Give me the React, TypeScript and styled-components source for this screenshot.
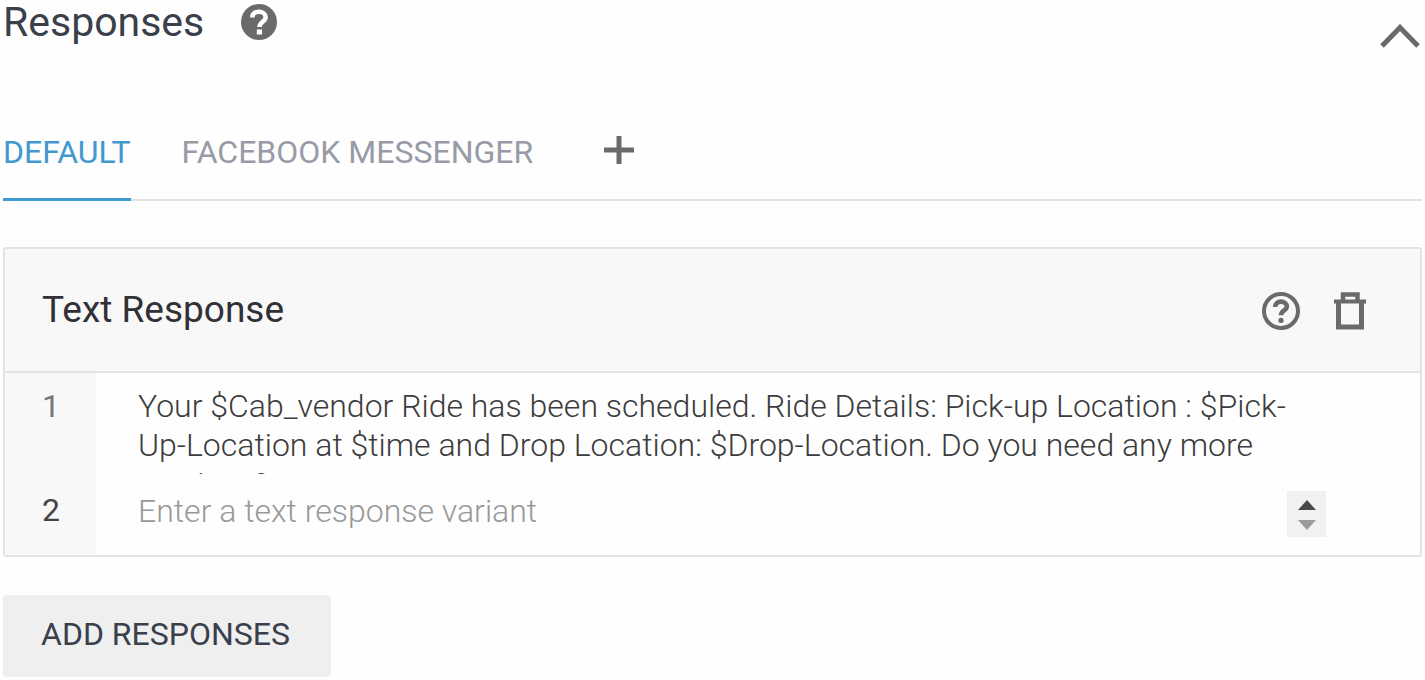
import React, { useState } from "react";
import styled, { createGlobalStyle } from "styled-components";

const GlobalStyle = createGlobalStyle`
  *, *::before, *::after { box-sizing: border-box; }
  body {
    margin: 0;
    background: #fefefe;
    color: #3a3f4c;
    font-family: Roboto, "Liberation Sans", sans-serif;
  }
  button, textarea { font: inherit; color: inherit; }
`;

const Page = styled.main`
  padding: 0 3px;
`;

const SectionHeader = styled.header`
  display: flex;
  align-items: flex-start;
  justify-content: space-between;
  height: 104px;
`;

const TitleGroup = styled.div`
  display: flex;
  align-items: center;
  gap: 37px;
  height: 44px;
`;

const Title = styled.h1`
  margin: 0;
  font-size: 41px;
  line-height: 44px;
  font-weight: 400;
`;

const IconButton = styled.button`
  display: flex;
  align-items: center;
  justify-content: center;
  padding: 0;
  border: 0;
  background: none;
  color: #6a6a6a;
  cursor: pointer;
`;

const CollapseButton = styled(IconButton)`
  height: 72px;
  padding-right: 2px;
`;

const Tabs = styled.div`
  display: flex;
  align-items: stretch;
  height: 97px;
  border-bottom: 2px solid #e2e2e2;
`;

const Tab = styled.button<{ $active?: boolean }>`
  margin: 0 51px -2px 0;
  padding: 2px 0 0;
  border: 0;
  border-bottom: 3px solid ${(p) => (p.$active ? "#3f9bd1" : "transparent")};
  background: none;
  color: ${(p) => (p.$active ? "#4399cf" : "#979ba6")};
  font-size: 32px;
  line-height: 40px;
  white-space: nowrap;
  cursor: pointer;
`;

const AddTabButton = styled(IconButton)`
  margin-left: 20px;
  height: 92px;
`;

const Card = styled.section`
  margin-top: 46px;
  border: 2px solid #e3e3e3;
  border-radius: 3px;
`;

const CardHeader = styled.div`
  display: flex;
  align-items: center;
  justify-content: space-between;
  height: 124px;
  padding: 0 54px 0 37px;
  border-bottom: 2px solid #e3e3e3;
  background: #f8f8f8;
`;

const CardTitle = styled.h2`
  margin: 0;
  font-size: 37px;
  line-height: 44px;
  font-weight: 400;
  color: #303036;
`;

const CardActions = styled.div`
  display: flex;
  align-items: center;
  gap: 34px;
  padding-top: 2px;
`;

const Variant = styled.div`
  display: flex;
`;

const Gutter = styled.label<{ $muted?: boolean }>`
  flex: 0 0 91px;
  padding: 14px 0 0 37px;
  background: #f8f8f8;
  color: ${(p) => (p.$muted ? "#777777" : "#444444")};
  font-size: 32px;
  line-height: 39px;
`;

const VariantBody = styled.div<{ $last?: boolean }>`
  display: flex;
  flex: 1;
  align-items: flex-start;
  min-width: 0;
  height: ${(p) => (p.$last ? "78px" : "104px")};
  padding: 14px 94px 0 42px;
`;

const VariantInput = styled.textarea<{ $rows: number }>`
  display: block;
  flex: 1;
  min-width: 0;
  height: ${(p) => (p.$rows > 1 ? "87px" : "46px")};
  margin: 0;
  padding: ${(p) => (p.$rows > 1 ? "0" : "1px 0 0")};
  border: 0;
  outline: 0;
  resize: none;
  overflow: hidden;
  background: transparent;
  color: #3c3c3c;
  font-size: 32px;
  line-height: 39px;
  font-weight: 300;
  &::placeholder { color: #999999; opacity: 1; }
`;

const Stepper = styled.div`
  display: flex;
  flex-direction: column;
  width: 39px;
  height: 46px;
  background: #f1f1f1;
`;

const StepButton = styled(IconButton)<{ $dim?: boolean }>`
  flex: 1;
  padding-top: ${(p) => (p.$dim ? "0" : "4px")};
  padding-bottom: ${(p) => (p.$dim ? "2px" : "0")};
  color: ${(p) => (p.$dim ? "#9c9c9c" : "#484848")};
`;

const AddButton = styled.button`
  margin-top: 38px;
  height: 82px;
  padding: 0 41px 4px 38px;
  border: 0;
  border-radius: 4px;
  background: #efefef;
  font-size: 32px;
  line-height: 40px;
  cursor: pointer;
`;

const HelpFilled = () => (
  <svg width="36" height="36" viewBox="0 0 36 36" aria-hidden="true">
    <circle cx="18" cy="18" r="18" fill="currentColor" />
    <path d="M11.3 13.5C11.3 9.5 14.5 7.8 18 7.8s6.6 2 6.6 5.5c0 4.4-6.1 4.7-6.1 9.7" fill="none" stroke="#fff" strokeWidth="4.6" />
    <rect x="15.8" y="25.5" width="5.2" height="5" fill="#fff" />
  </svg>
);

const HelpOutline = () => (
  <svg width="38" height="38" viewBox="0 0 38 38" aria-hidden="true">
    <circle cx="19" cy="19" r="17" fill="none" stroke="currentColor" strokeWidth="4" />
    <path d="M13.2 15c0-3.6 2.6-5.4 5.8-5.4s5.8 1.9 5.8 4.9c0 4-5.8 4-5.8 8.8" fill="none" stroke="currentColor" strokeWidth="4.6" />
    <circle cx="19" cy="28.4" r="2.6" fill="currentColor" />
  </svg>
);

const Trash = () => (
  <svg width="32" height="38" viewBox="0 0 32 38" fill="none" stroke="currentColor" aria-hidden="true">
    <path d="M0 9.5h32" strokeWidth="4" />
    <path d="M9 9.5V2.5h14.5v7" strokeWidth="4.5" />
    <path d="M4.5 9.5v25.5h23V9.5" strokeWidth="5" />
  </svg>
);

const Chevron = () => (
  <svg width="40" height="24" viewBox="0 0 40 24" aria-hidden="true">
    <path d="M2 22 20 3.5 38 22" fill="none" stroke="currentColor" strokeWidth="5" />
  </svg>
);

const Plus = () => (
  <svg width="30" height="30" viewBox="0 0 30 30" aria-hidden="true">
    <path d="M15 1v28M0 15h30" fill="none" stroke="currentColor" strokeWidth="5" />
  </svg>
);

const Triangle = ({ down }: { down?: boolean }) => (
  <svg width="18" height="10" viewBox="0 0 18 10" aria-hidden="true">
    <path d={down ? "M0 0h18L9 10z" : "M0 10h18L9 0z"} fill="currentColor" />
  </svg>
);

export default function App() {
  const [first, setFirst] = useState(
    "Your $Cab_vendor Ride has been scheduled. Ride Details: Pick-up Location : $Pick-Up-Location at $time and Drop Location: $Drop-Location. Do you need any more services?"
  );
  const [second, setSecond] = useState("");

  return (
    <>
      <GlobalStyle />
      <Page>
        <SectionHeader>
          <TitleGroup>
            <Title>Responses</Title>
            <IconButton aria-label="Help"><HelpFilled /></IconButton>
          </TitleGroup>
          <CollapseButton aria-label="Collapse"><Chevron /></CollapseButton>
        </SectionHeader>

        <Tabs role="tablist">
          <Tab role="tab" aria-selected="true" $active>DEFAULT</Tab>
          <Tab role="tab" aria-selected="false">FACEBOOK MESSENGER</Tab>
          <AddTabButton aria-label="Add tab"><Plus /></AddTabButton>
        </Tabs>

        <Card>
          <CardHeader>
            <CardTitle>Text Response</CardTitle>
            <CardActions>
              <IconButton aria-label="Help"><HelpOutline /></IconButton>
              <IconButton aria-label="Delete"><Trash /></IconButton>
            </CardActions>
          </CardHeader>
          <Variant>
            <Gutter htmlFor="variant-1" $muted>1</Gutter>
            <VariantBody>
              <VariantInput id="variant-1" $rows={2} value={first} onChange={(e) => setFirst(e.target.value)} />
            </VariantBody>
          </Variant>
          <Variant>
            <Gutter htmlFor="variant-2">2</Gutter>
            <VariantBody $last>
              <VariantInput
                id="variant-2"
                $rows={1}
                placeholder="Enter a text response variant"
                value={second}
                onChange={(e) => setSecond(e.target.value)}
              />
              <Stepper>
                <StepButton aria-label="Scroll up"><Triangle /></StepButton>
                <StepButton aria-label="Scroll down" $dim><Triangle down /></StepButton>
              </Stepper>
            </VariantBody>
          </Variant>
        </Card>

        <AddButton>ADD RESPONSES</AddButton>
      </Page>
    </>
  );
}
